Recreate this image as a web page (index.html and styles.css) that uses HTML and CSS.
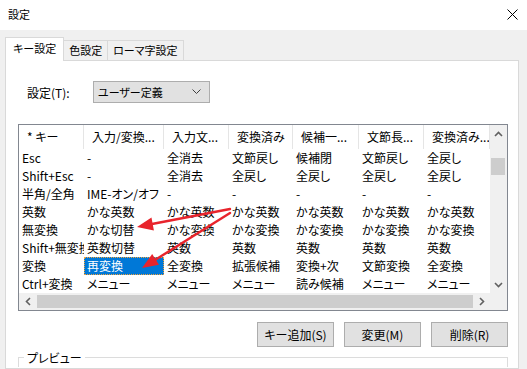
FILE: index.html
```html
<!DOCTYPE html>
<html lang="ja">
<head>
<meta charset="UTF-8">
<title>設定</title>
<link rel="stylesheet" href="styles.css">
</head>
<body>
<div class="titlebar">
    <span class="title">設定</span>
    <svg class="close" width="11" height="11" viewBox="0 0 11 11"><path d="M0.5 0.5 L10.5 10.5 M10.5 0.5 L0.5 10.5" stroke="#000" stroke-width="1" fill="none"/></svg>
</div>
<div class="dialog">
    <div class="tabs">
        <div class="tab active">キー設定</div>
        <div class="tab">色設定</div>
        <div class="tab">ローマ字設定</div>
    </div>
    <div class="panel">
        <div class="setting-row">
            <label>設定(T):</label>
            <div class="combo">
                <span>ユーザー定義</span>
                <svg width="9" height="6" viewBox="0 0 9 6"><path d="M0.5 0.5 L4.5 4.5 L8.5 0.5" stroke="#404040" fill="none"/></svg>
            </div>
        </div>

        <div class="listview">
            <div class="lv-table">
                <div class="th">* キー</div><div class="th">入力/変換...</div><div class="th">入力文...</div><div class="th">変換済み</div><div class="th">候補一...</div><div class="th">文節長...</div><div class="th">変換済み...</div>

                <div class="td">Esc</div><div class="td">-</div><div class="td">全消去</div><div class="td">文節戻し</div><div class="td">候補閉</div><div class="td">文節戻し</div><div class="td">全戻し</div>
                <div class="td">Shift+Esc</div><div class="td">-</div><div class="td">全消去</div><div class="td">全戻し</div><div class="td">全戻し</div><div class="td">全戻し</div><div class="td">全戻し</div>
                <div class="td">半角/全角</div><div class="td">IME-オン/オフ</div><div class="td">-</div><div class="td">-</div><div class="td">-</div><div class="td">-</div><div class="td">-</div>
                <div class="td">英数</div><div class="td">かな英数</div><div class="td">かな英数</div><div class="td">かな英数</div><div class="td">かな英数</div><div class="td">かな英数</div><div class="td">かな英数</div>
                <div class="td">無変換</div><div class="td">かな切替</div><div class="td">かな変換</div><div class="td">かな変換</div><div class="td">かな変換</div><div class="td">かな変換</div><div class="td">かな変換</div>
                <div class="td">Shift+無変換</div><div class="td">英数切替</div><div class="td">英数</div><div class="td">英数</div><div class="td">英数</div><div class="td">英数</div><div class="td">英数</div>
                <div class="td">変換</div><div class="td selected">再変換</div><div class="td">全変換</div><div class="td">拡張候補</div><div class="td">変換+次</div><div class="td">文節変換</div><div class="td">全変換</div>
                <div class="td">Ctrl+変換</div><div class="td">メニュー</div><div class="td">メニュー</div><div class="td">メニュー</div><div class="td">読み候補</div><div class="td">メニュー</div><div class="td">メニュー</div>
            </div>

            <div class="vscroll">
                <div class="sb-btn"><svg width="9" height="6" viewBox="0 0 9 6"><path d="M1 5 L4.5 1.5 L8 5" stroke="#606060" stroke-width="1.6" fill="none"/></svg></div>
                <div class="sb-track"><div class="vthumb"></div></div>
                <div class="sb-btn"><svg width="9" height="6" viewBox="0 0 9 6"><path d="M1 1 L4.5 4.5 L8 1" stroke="#606060" stroke-width="1.6" fill="none"/></svg></div>
            </div>
            <div class="hscroll">
                <div class="sb-btn"><svg width="6" height="9" viewBox="0 0 6 9"><path d="M5 1 L1.5 4.5 L5 8" stroke="#606060" stroke-width="1.6" fill="none"/></svg></div>
                <div class="sb-track"><div class="hthumb"></div></div>
                <div class="sb-btn"><svg width="6" height="9" viewBox="0 0 6 9"><path d="M1 1 L4.5 4.5 L1 8" stroke="#606060" stroke-width="1.6" fill="none"/></svg></div>
            </div>
            <div class="corner"></div>
        </div>

        <div class="buttons">
            <button type="button">キー追加(S)</button>
            <button type="button">変更(M)</button>
            <button type="button">削除(R)</button>
        </div>

        <fieldset class="preview">
            <legend>プレビュー</legend>
        </fieldset>
    </div>
</div>

<!-- annotation arrows drawn over the list -->
<svg class="arrows" width="527" height="369" viewBox="0 0 527 369">
    <g stroke="#e8242c" stroke-width="2.4" fill="none" stroke-linecap="round">
        <path d="M230 209 L152 224"/>
        <path d="M230 213 L155 260"/>
    </g>
    <g fill="#e8242c">
        <polygon points="137,227 153.9,230.4 151.5,217.6"/>
        <polygon points="142,268 159,264.8 152.2,254"/>
    </g>
</svg>
</body>
</html>
```

FILE: styles.css
```css
body { margin: 0; background: #f0f0f0; font-family: 
    "Noto Sans CJK JP", "Noto Sans", sans-serif; font-size: 12px; 
    color: #000; font-feature-settings: "palt"; overflow: hidden;
    height: 369px;
}
.titlebar { height: 30px; background: #fff; display: flex; 
    align-items: center; justify-content: space-between; 
    padding: 0 9px 2px 8px; box-sizing: border-box;
}
.title { font-size: 11px;
}
.dialog { padding: 8px 8px 0 5px;
}
.tabs { display: flex; align-items: flex-end; height: 22px; 
    position: relative; z-index: 1; font-size: 11px;
}
.tab { height: 19px; line-height: 19px; padding: 0 5px; 
    border: 1px solid #d9d9d9; border-bottom: none; 
    margin-left: -1px; background: #f0f0f0;
}
.tab.active { height: 23px; line-height: 21px; padding: 0 7px; 
    margin-left: 0; background: #fff; margin-bottom: -1px;
}
.panel { background: #fff; border: 1px solid #d9d9d9; 
    padding: 20px 10px 0 12px; height: 309px; box-sizing: border-box;
}
.setting-row { display: flex; align-items: center;
}
.setting-row label { width: 75px; padding-left: 9px; 
    box-sizing: border-box;
}
.combo { width: 117px; height: 22px; box-sizing: border-box; 
    border: 1px solid #adadad; background: #e1e1e1; display: flex; 
    align-items: center; justify-content: space-between; 
    padding: 0 8px 0 4px; font-size: 11px;
}
.listview { margin-top: 21px; width: 488px; border: 1px solid #828790; 
    display: grid; grid-template-columns: 471px 17px; 
    grid-template-rows: 168px 17px;
}
.lv-table { display: grid; grid-template-columns: 65px 80px 65px 
    64px 66px 65px 66px; grid-template-rows: 24px; 
    grid-auto-rows: 18px; overflow: hidden;
}
.th { line-height: 24px; padding-left: 8px; border-right: 1px 
    solid #e5e5e5; white-space: nowrap; overflow: hidden;
}
.td { line-height: 18px; padding-left: 3px; white-space: nowrap; 
    overflow: hidden;
}
.td.selected { background: #0078d7; color: #fff; outline: 1px 
    dotted #f2a33c; outline-offset: -1px;
}
.vscroll, .hscroll, .corner { background: #f0f0f0;
}
.vscroll { display: flex; flex-direction: column;
}
.hscroll { display: flex;
}
.sb-btn { width: 17px; height: 17px; flex: none; display: flex; 
    align-items: center; justify-content: center;
}
.sb-track { flex: 1; position: relative;
}
.vthumb { margin: 16px 2px 0 1px; height: 17px; background: #cdcdcd;
}
.hthumb { margin: 2px 0 2px 1px; height: 13px; background: #cdcdcd;
}
.buttons { display: flex; justify-content: flex-end; gap: 10px; 
    margin: 11px 1px 0 0; width: 490px;
}
button { width: 77px; height: 25px; background: #e1e1e1; 
    border: 1px solid #adadad; font: inherit; color: #000; 
    padding: 0;
}
.preview { margin: 2px 0 0 0; width: 490px; box-sizing: border-box; 
    border: 1px solid #dcdcdc; border-bottom: none; padding: 0; 
    height: 18px;
}
.preview legend { margin-left: 5px; padding: 0 3px;
}
.arrows { position: absolute; left: 0; top: 0; pointer-events: none;
}
```
